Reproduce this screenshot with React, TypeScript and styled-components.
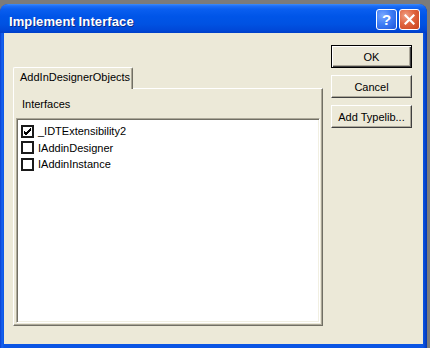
import React from 'react'
import styled, { createGlobalStyle } from 'styled-components'

const Global = createGlobalStyle`
  html, body { margin: 0; padding: 0; background: #7b7b7b; }
  body { width: 430px; height: 348px; overflow: hidden; font-family: "Liberation Sans", Arial, sans-serif; }
`

const Window = styled.div`
  width: 427px;
  height: 344px;
  margin-top: 4px;
  border-radius: 8px 8px 0 0;
  background: linear-gradient(90deg, #0a3fd0 0, #1663f0 2px, #0a55e4 4px, #0a55e4 calc(100% - 4px), #0036b8 100%);
  display: flex;
  flex-direction: column;
  overflow: hidden;
`

const TitleBar = styled.div`
  height: 29px;
  flex: none;
  display: flex;
  align-items: center;
  padding: 0 7px 0 9px;
  border-radius: 8px 8px 0 0;
  background: linear-gradient(180deg, #3c8cf8 0, #1e6ef6 2px, #0a5ff0 5px, #0055e8 12px, #0052e2 20px, #0048d8 26px, #003fc8 29px);
`

const Title = styled.div`
  flex: 1;
  color: #fff;
  font: bold 13px "Liberation Sans", Arial, sans-serif;
  text-shadow: 1px 1px #0b2a8a;
  padding-top: 5px;
  letter-spacing: 0.1px;
`

const CapButton = styled.div<{ $close?: boolean }>`
  width: 19px;
  height: 19px;
  margin-left: 2px;
  margin-top: 1px;
  border: 1px solid #fff;
  border-radius: 3px;
  display: flex;
  align-items: center;
  justify-content: center;
  color: #fff;
  font: bold 15px "Liberation Sans", Arial, sans-serif;
  background: ${p => p.$close
    ? 'radial-gradient(circle at 30% 30%, #f0a086 0, #e0643e 45%, #c8401c 100%)'
    : 'radial-gradient(circle at 30% 30%, #7aa8ff 0, #3f7ef6 45%, #1f55da 100%)'};
`

const Client = styled.div`
  flex: 1;
  margin: 0 4px 4px 4px;
  background: #ece9d8;
  display: flex;
  align-items: flex-start;
  padding: 12px 0 0 9px;
`

const TabControl = styled.div`
  width: 310px;
  margin-top: 22px;
  display: flex;
  flex-direction: column;
`

const TabStrip = styled.div`
  display: flex;
  height: 21px;
`

const Tab = styled.div`
  width: 120px;
  height: 22px;
  box-sizing: border-box;
  padding: 3px 0 0 6px;
  border-top: 1px solid #fff;
  border-left: 1px solid #fff;
  border-right: 1px solid #716f64;
  box-shadow: inset -1px 0 #aca899;
  border-radius: 2px 2px 0 0;
  background: #ece9d8;
  font-size: 11px;
  color: #000;
  position: relative;
  z-index: 1;
  margin-bottom: -1px;
`

const Panel = styled.div`
  height: 238px;
  box-sizing: border-box;
  border-top: 1px solid #fff;
  border-left: 1px solid #fff;
  border-right: 1px solid #716f64;
  border-bottom: 1px solid #716f64;
  box-shadow: inset -1px -1px #aca899;
  padding: 0 2px 2px 2px;
  display: flex;
  flex-direction: column;
`

const Label = styled.div`
  margin: 9px 0 0 6px;
  height: 13px;
  line-height: 13px;
  font-size: 11px;
  color: #000;
`

const ListBox = styled.div`
  flex: 1;
  margin-top: 7px;
  background: #fff;
  border-top: 1px solid #aca899;
  border-left: 1px solid #aca899;
  border-right: 1px solid #fff;
  border-bottom: 1px solid #fff;
  box-shadow: inset 1px 1px #716f64, inset -1px -1px #f1efe2;
  padding: 4px 0 0 4px;
`

const Row = styled.div`
  height: 16.5px;
  display: flex;
  align-items: center;
  font-size: 11px;
  color: #000;
`

const Box = styled.span`
  width: 13px;
  height: 13px;
  box-sizing: border-box;
  border: 2px solid #1a1a1a;
  background: #fff;
  margin-right: 4px;
  display: flex;
  align-items: center;
  justify-content: center;
`

const Buttons = styled.div`
  margin-left: 8px;
  width: 81px;
  display: flex;
  flex-direction: column;
  gap: 7px;
`

const Button = styled.div<{ $default?: boolean }>`
  height: 23px;
  box-sizing: border-box;
  display: flex;
  align-items: center;
  justify-content: center;
  font-size: 11px;
  color: #000;
  background: #ece9d8;
  border-top: 1px solid #fff;
  border-left: 1px solid #fff;
  border-right: 1px solid #404040;
  border-bottom: 1px solid #404040;
  box-shadow: inset -1px -1px #aca899;
  ${p => p.$default && `
    border: 1px solid #000;
    box-shadow: inset 1px 1px #fff, inset -1px -1px #404040, inset -2px -2px #aca899;
  `}
`

function Check({ on }: { on: boolean }) {
  return (
    <Box>
      {on && (
        <svg width="9" height="9" viewBox="0 0 9 9">
          <path d="M1 4 L3 6 L8 1 M1 5 L3 7 L8 2 M1 6 L3 8 L8 3" stroke="#000" strokeWidth="1" fill="none" />
        </svg>
      )}
    </Box>
  )
}

const items = [
  { name: '_IDTExtensibility2', on: true },
  { name: 'IAddinDesigner', on: false },
  { name: 'IAddinInstance', on: false },
]

export default function App() {
  return (
    <>
      <Global />
      <Window>
        <TitleBar>
          <Title>Implement Interface</Title>
          <CapButton>?</CapButton>
          <CapButton $close>
            <svg width="11" height="11" viewBox="0 0 11 11">
              <path d="M1.5 1.5 L9.5 9.5 M9.5 1.5 L1.5 9.5" stroke="#fff" strokeWidth="2.2" strokeLinecap="square" />
            </svg>
          </CapButton>
        </TitleBar>
        <Client>
          <TabControl>
            <TabStrip>
              <Tab>AddInDesignerObjects</Tab>
            </TabStrip>
            <Panel>
              <Label>Interfaces</Label>
              <ListBox>
                {items.map(it => (
                  <Row key={it.name}>
                    <Check on={it.on} />
                    {it.name}
                  </Row>
                ))}
              </ListBox>
            </Panel>
          </TabControl>
          <Buttons>
            <Button $default>OK</Button>
            <Button>Cancel</Button>
            <Button>Add Typelib...</Button>
          </Buttons>
        </Client>
      </Window>
    </>
  )
}
